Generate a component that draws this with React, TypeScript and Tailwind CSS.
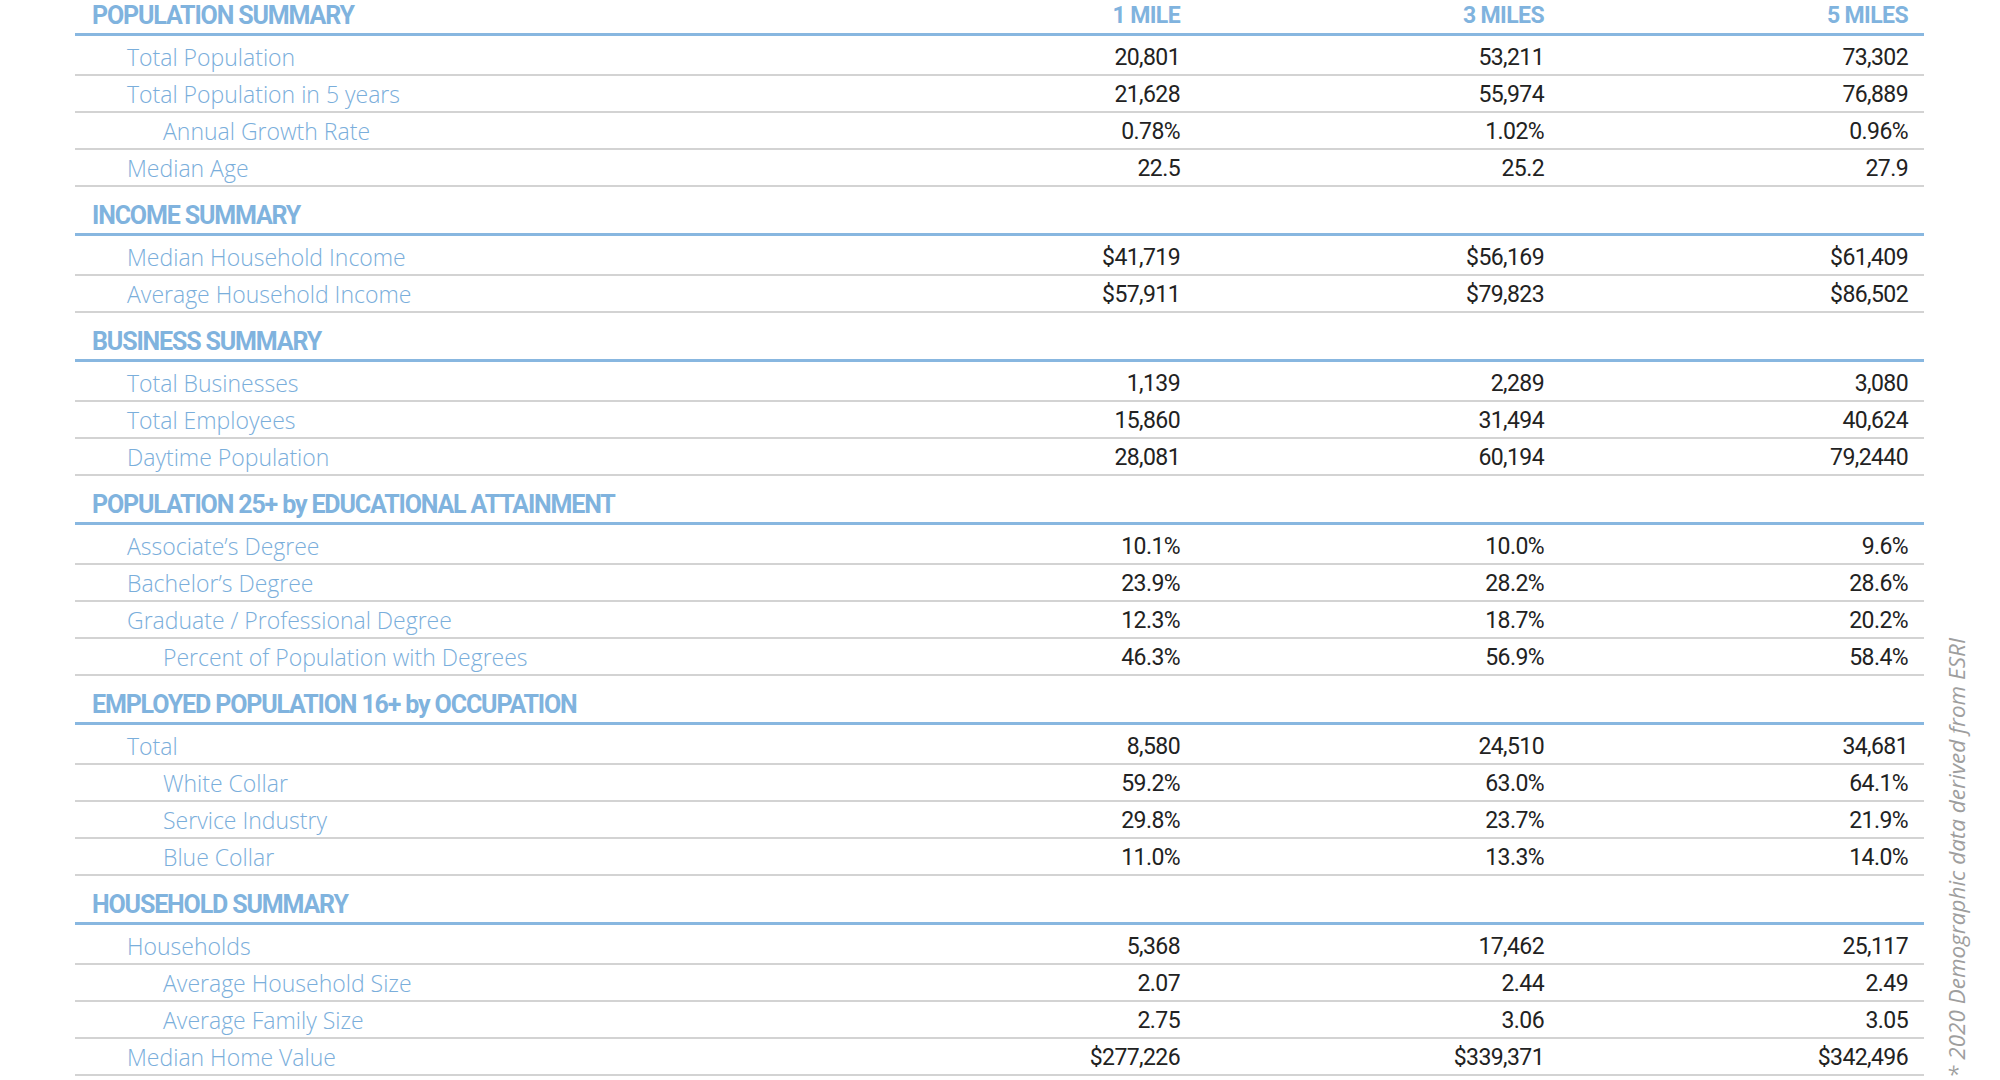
type Row = [string, number, string, string, string];

interface Section {
  title: string;
  rows: Row[];
}

const sections: Section[] = [
  {
    title: 'POPULATION SUMMARY',
    rows: [
      ['Total Population', 1, '20,801', '53,211', '73,302'],
      ['Total Population in 5 years', 1, '21,628', '55,974', '76,889'],
      ['Annual Growth Rate', 2, '0.78%', '1.02%', '0.96%'],
      ['Median Age', 1, '22.5', '25.2', '27.9'],
    ],
  },
  {
    title: 'INCOME SUMMARY',
    rows: [
      ['Median Household Income', 1, '$41,719', '$56,169', '$61,409'],
      ['Average Household Income', 1, '$57,911', '$79,823', '$86,502'],
    ],
  },
  {
    title: 'BUSINESS SUMMARY',
    rows: [
      ['Total Businesses', 1, '1,139', '2,289', '3,080'],
      ['Total Employees', 1, '15,860', '31,494', '40,624'],
      ['Daytime Population', 1, '28,081', '60,194', '79,2440'],
    ],
  },
  {
    title: 'POPULATION 25+ by EDUCATIONAL ATTAINMENT',
    rows: [
      ['Associate’s Degree', 1, '10.1%', '10.0%', '9.6%'],
      ['Bachelor’s Degree', 1, '23.9%', '28.2%', '28.6%'],
      ['Graduate / Professional Degree', 1, '12.3%', '18.7%', '20.2%'],
      ['Percent of Population with Degrees', 2, '46.3%', '56.9%', '58.4%'],
    ],
  },
  {
    title: 'EMPLOYED POPULATION 16+ by OCCUPATION',
    rows: [
      ['Total', 1, '8,580', '24,510', '34,681'],
      ['White Collar', 2, '59.2%', '63.0%', '64.1%'],
      ['Service Industry', 2, '29.8%', '23.7%', '21.9%'],
      ['Blue Collar', 2, '11.0%', '13.3%', '14.0%'],
    ],
  },
  {
    title: 'HOUSEHOLD SUMMARY',
    rows: [
      ['Households', 1, '5,368', '17,462', '25,117'],
      ['Average Household Size', 2, '2.07', '2.44', '2.49'],
      ['Average Family Size', 2, '2.75', '3.06', '3.05'],
      ['Median Home Value', 1, '$277,226', '$339,371', '$342,496'],
    ],
  },
];

const grid = 'grid grid-cols-[741px_364px_364px_364px] pr-[16px]';

function SectionHeading({ title, first }: { title: string; first: boolean }) {
  return (
    <div
      className={`${grid} items-end border-b-[3px] border-[#88b7e0] pb-[5px] ${first ? 'h-[36px]' : 'h-[49px]'}`}
    >
      <div className="pl-[17px] text-[25px] leading-[25px] font-bold text-[#80b3de] [font-family:'Roboto',sans-serif] tracking-[-1.15px]">
        {title}
      </div>
      {first &&
        ['1 MILE', '3 MILES', '5 MILES'].map((h) => (
          <div
            key={h}
            className="text-right text-[23px] leading-[25px] font-bold text-[#80b3de] [font-family:'Roboto',sans-serif] tracking-[-0.6px]"
          >
            {h}
          </div>
        ))}
    </div>
  );
}

function DataRow({ row, first }: { row: Row; first: boolean }) {
  const [label, level, a, b, c] = row;
  return (
    <div className={`${grid} h-[37px] items-center border-b-2 border-[#d3d3d3] ${first ? 'mt-[3px]' : ''}`}>
      <div
        className={`text-[23px] font-light text-[#7aaedb] [font-family:'Open_Sans',sans-serif] ${level === 2 ? 'pl-[88px]' : 'pl-[52px]'}`}
      >
        {label}
      </div>
      {[a, b, c].map((v, i) => (
        <div key={i} className="pt-[2px] text-right text-[23px] text-[#222222] [font-family:'Roboto',sans-serif] tracking-[-0.6px]">
          {v}
        </div>
      ))}
    </div>
  );
}

export default function App() {
  return (
    <div className="flex h-[1080px] w-[2000px] overflow-hidden bg-white">
      <div className="ml-[75px] w-[1849px]">
        {sections.map((s, si) => (
          <div key={s.title}>
            <SectionHeading title={s.title} first={si === 0} />
            {s.rows.map((r, ri) => (
              <DataRow key={r[0]} row={r} first={ri === 0} />
            ))}
          </div>
        ))}
      </div>
      <div className="flex flex-1 items-end pb-[2px] pl-[22px]">
        <div className="rotate-180 [writing-mode:vertical-rl] text-[22.5px] italic leading-[22px] text-[#9e9e9e] [font-family:'Open_Sans',sans-serif] whitespace-nowrap">
          * 2020 Demographic data derived from ESRI
        </div>
      </div>
    </div>
  );
}
